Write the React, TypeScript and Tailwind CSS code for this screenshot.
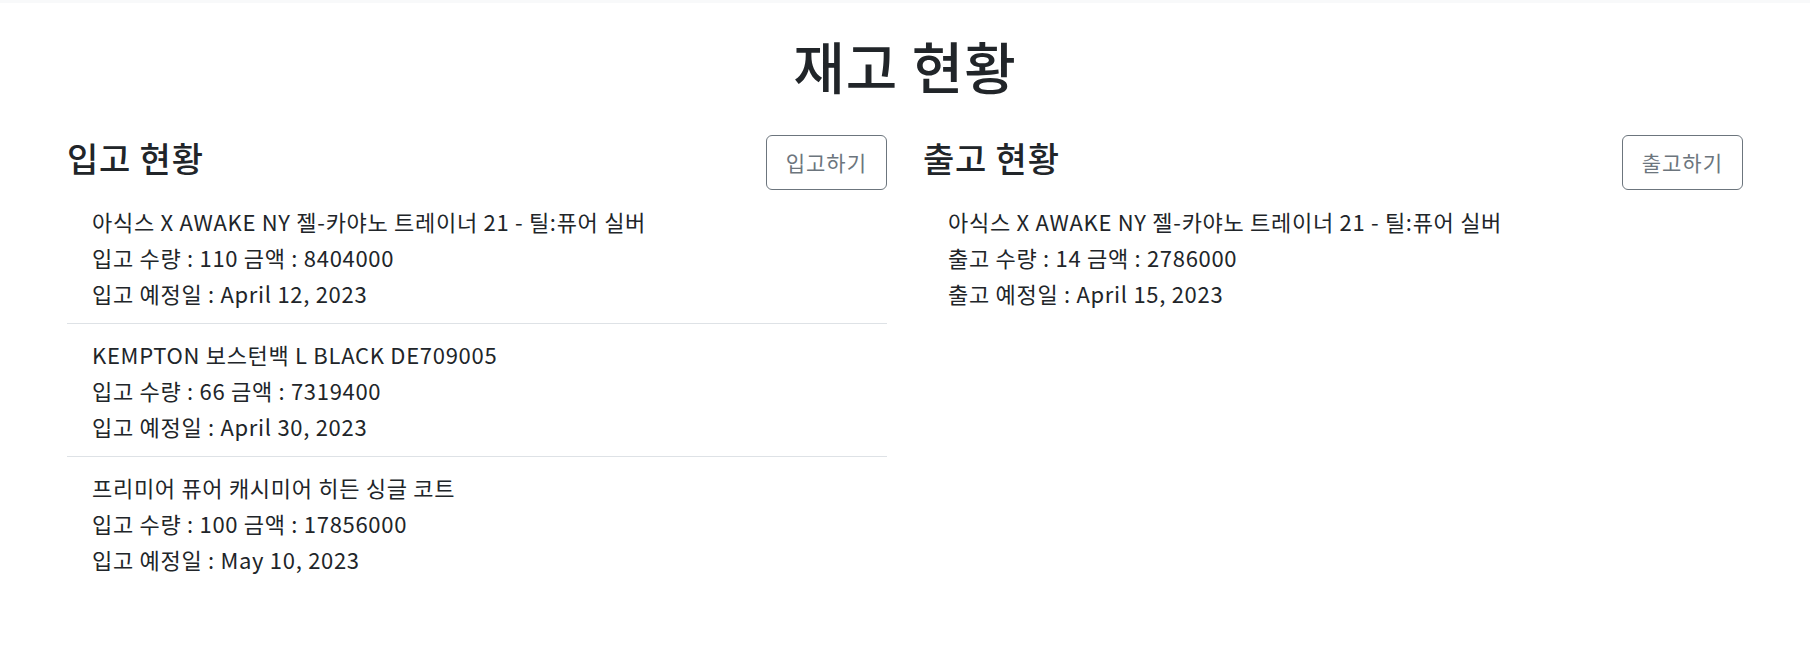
import React from "react";

const font = { fontFamily: '"Noto Sans CJK KR", "Noto Sans", sans-serif' };

type Item = { name: string; qty: number; amount: number; date: string };

const inbound: Item[] = [
  { name: "아식스 X AWAKE NY 젤-카야노 트레이너 21 - 틸:퓨어 실버", qty: 110, amount: 8404000, date: "April 12, 2023" },
  { name: "KEMPTON 보스턴백 L BLACK DE709005", qty: 66, amount: 7319400, date: "April 30, 2023" },
  { name: "프리미어 퓨어 캐시미어 히든 싱글 코트", qty: 100, amount: 17856000, date: "May 10, 2023" },
];

const outbound: Item[] = [
  { name: "아식스 X AWAKE NY 젤-카야노 트레이너 21 - 틸:퓨어 실버", qty: 14, amount: 2786000, date: "April 15, 2023" },
];

function Column({ title, button, prefix, items }: { title: string; button: string; prefix: string; items: Item[] }) {
  return (
    <div className="flex flex-col">
      <div className="flex items-start justify-between h-[55px]">
        <h3 className="mt-[6px] text-[34px] leading-none font-medium tracking-[0.8px] text-[#212529]">{title}</h3>
        <button className="h-[55px] px-[19px] rounded-[6px] border border-[#6c757d] text-[#6c757d] text-[21px] tracking-[1px] bg-white">
          {button}
        </button>
      </div>
      <ul className="mt-[1px]">
        {items.map((it, i) => (
          <li
            key={i}
            className={`pl-[25px] py-[12px] text-[22px] tracking-[0.7px] leading-[36px] text-[#212529] ${i < items.length - 1 ? "border-b border-[#dee2e6]" : ""}`}
          >
            <div>{it.name}</div>
            <div>
              {prefix} 수량 : {it.qty} 금액 : {it.amount}
            </div>
            <div>
              {prefix} 예정일 : {it.date}
            </div>
          </li>
        ))}
      </ul>
    </div>
  );
}

export default function App() {
  return (
    <div style={font} className="min-h-[662px] bg-white">
      <div className="h-[3px] bg-[#f8f9fa]" />
      <h1 className="text-center text-[56px] leading-none font-medium tracking-[1px] text-[#212529] pt-[34px] pb-[42px]">재고 현황</h1>
      <div className="grid grid-cols-2 gap-[36px] px-[67px]">
        <Column title="입고 현황" button="입고하기" prefix="입고" items={inbound} />
        <Column title="출고 현황" button="출고하기" prefix="출고" items={outbound} />
      </div>
    </div>
  );
}
